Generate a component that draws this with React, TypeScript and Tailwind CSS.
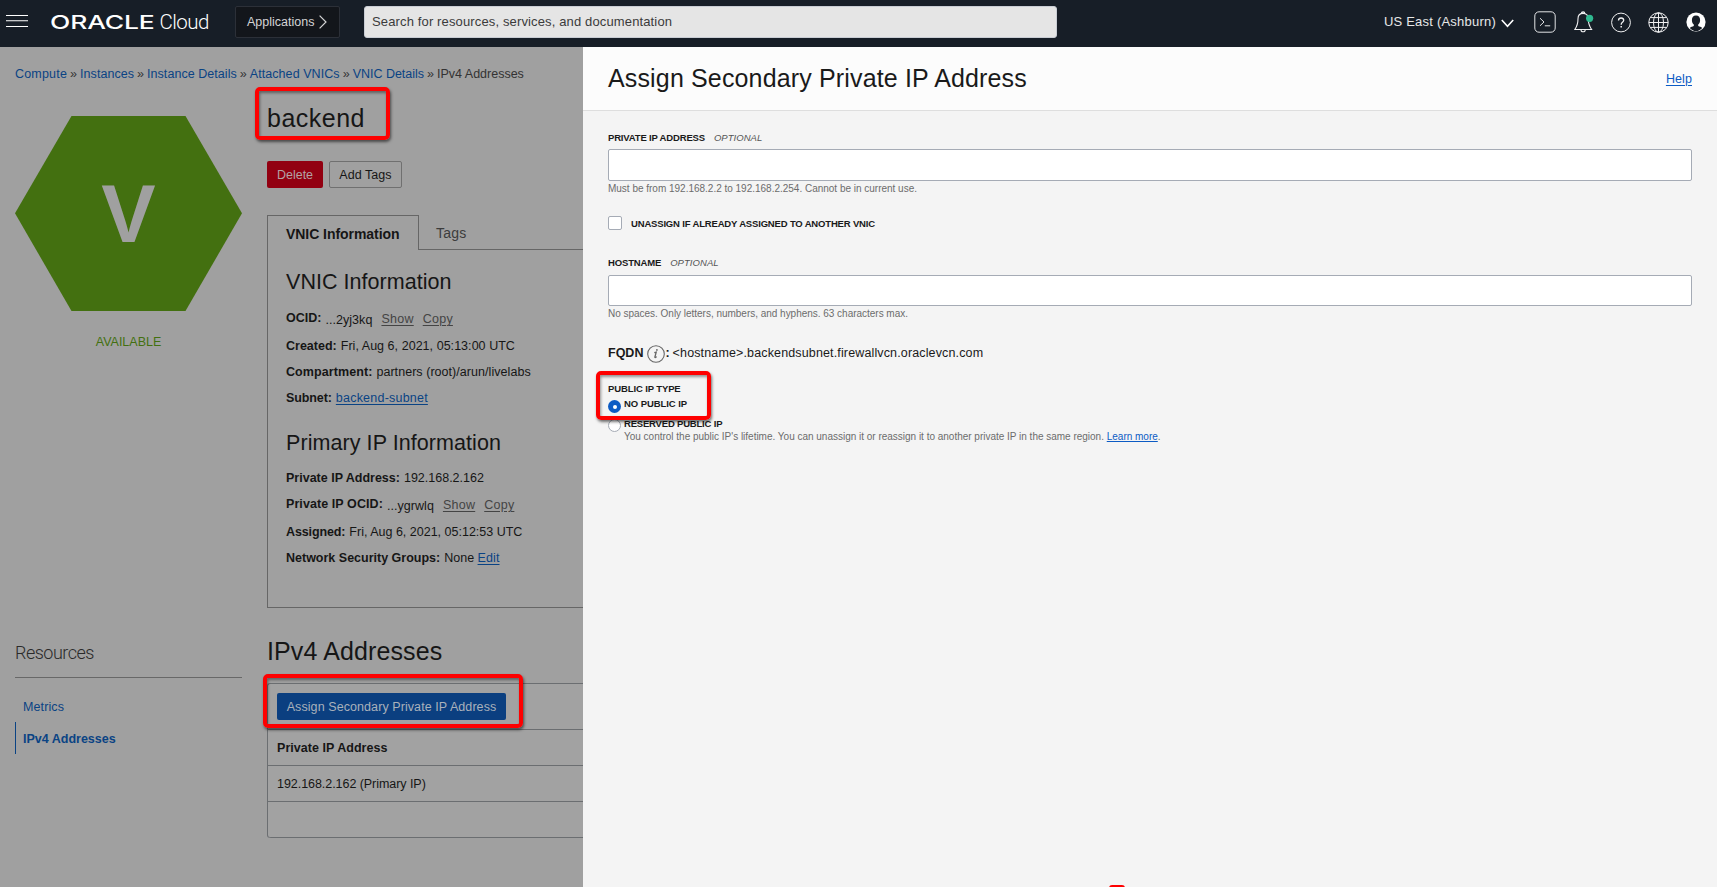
import type { ReactNode } from "react";

const crumbs = [
  { label: "Compute", cls: "tracking-[0.19px]" },
  { label: "Instances", cls: "tracking-[0.05px]" },
  { label: "Instance Details", cls: "tracking-[0.05px]" },
  { label: "Attached VNICs", cls: "tracking-[0.07px]" },
  { label: "VNIC Details", cls: "tracking-[-0.02px]" },
];

function Hamburger() {
  return (
    <svg className="h-[14px] w-[22px] shrink-0" viewBox="0 0 22 14" stroke="#fff" strokeWidth="1.1">
      <path d="M0 1.500h22M0 6.700h22M0 12.500h22" />
    </svg>
  );
}

function TerminalIcon() {
  return (
    <svg className="h-[22px] w-[22px]" viewBox="0 0 22 22" fill="none" stroke="#e3e4e6" strokeWidth="1">
      <rect x="0.8" y="0.8" width="20.4" height="20.4" rx="4.2" />
      <path d="M6 7.2l4 3.8-4 3.8M10.8 14.8h5.4" />
    </svg>
  );
}

function BellIcon() {
  return (
    <svg className="h-[22px] w-[20px]" viewBox="0 0 20 22" fill="none" stroke="#f1f1f2" strokeWidth="1.1">
      <path d="M7.4 2.6a1.7 1.7 0 0 1 3.4 0M9.1 2.4c-3.3 0-5.1 2.4-5.1 5.4 0 5-.7 7.3-3.2 10.7h16.8c-2.5-3.4-3.3-5.7-3.3-10.7 0-3-1.9-5.4-5.2-5.4z" />
      <path d="M7 18.7a2.1 2.1 0 0 0 4.2 0" />
      <circle cx="15.6" cy="7.3" r="3.6" fill="#2fb990" stroke="none" />
    </svg>
  );
}

function HelpIcon() {
  return (
    <svg className="h-[21px] w-[20px]" viewBox="0 0 20 21" fill="none" stroke="#f1f1f2" strokeWidth="1">
      <circle cx="10" cy="10.5" r="9.4" />
      <path d="M7.5 8.500c0-1.700 1-2.500 2.600-2.500s2.600.9 2.600 2.300c0 1.900-2.500 2.100-2.500 4.100v.4" strokeWidth="1.300" />
      <path d="M10.2 14v1.500" strokeWidth="1.500" />
    </svg>
  );
}

function GlobeIcon() {
  return (
    <svg className="h-[21px] w-[21px]" viewBox="0 0 21 21" fill="none" stroke="#f1f1f2" strokeWidth="1">
      <circle cx="10.5" cy="10.5" r="9.7" />
      <ellipse cx="10.5" cy="10.5" rx="5" ry="9.7" />
      <path d="M10.5 .8v19.4M.8 10.5h19.4M2.6 5.6h15.8M2.6 15.4h15.8" />
    </svg>
  );
}

function AvatarIcon() {
  return (
    <svg className="h-[20px] w-[20px]" viewBox="0 0 20 20">
      <circle cx="10" cy="10" r="9.6" fill="#fff" />
      <path
        d="M10 3.6c-2.8 0-4.1 1.9-4.1 4.4 0 2 .7 3.6 1.9 4.6v1.300c-1.400.5-3 1-4 2C5.500 18 7.600 19 10 19s4.500-1 6.200-3.100c-1-1-2.600-1.500-4-2v-1.300c1.200-1 1.900-2.600 1.900-4.600 0-2.500-1.300-4.400-4.100-4.400z"
        fill="#171e27"
      />
    </svg>
  );
}

function InfoIcon() {
  return (
    <svg className="ml-1 h-[18px] w-[18px] self-end" viewBox="0 0 18 18" fill="none" stroke="#666">
      <circle cx="9" cy="9" r="8.3" strokeWidth="1.1" />
      <path d="M7.300 7.600l1.900-.5-1.300 4.900c-.2.9.6.8 1.800-.4" strokeWidth="1.3" />
      <circle cx="9.900" cy="4.900" r=".9" fill="#666" stroke="none" />
    </svg>
  );
}

function Row({ label, labelClass = "", children }: { label: string; labelClass?: string; children: ReactNode }) {
  return (
    <div className="flex h-5 whitespace-pre leading-5">
      <span className={"font-bold " + labelClass}>{label}</span>
      <span className="ml-1">{children}</span>
    </div>
  );
}

function OcidRow({ label, labelClass, value }: { label: string; labelClass: string; value: string }) {
  return (
    <div className="flex h-[22px] leading-5">
      <span className={"font-bold " + labelClass}>{label}</span>
      <span className="ml-1 pt-0.5 tracking-[0.05px]">{value}</span>
      <a className="ml-[9px] pt-px tracking-[0.25px] text-[#444] underline underline-offset-2">Show</a>
      <a className="ml-[9px] pt-px tracking-[0.25px] text-[#444] underline underline-offset-2">Copy</a>
    </div>
  );
}

function TopBar() {
  return (
    <header className="flex h-[47px] items-start bg-[#171e27] pl-[6px] pr-[11px] text-[#e6e7e8]">
      <div className="mt-[14px]">
        <Hamburger />
      </div>
      <div className="ml-[22px] mt-[10px] flex h-6 w-[159px] items-center text-white">
        <span className="w-[110px] origin-left scale-x-[1.43] font-['Inter'] text-[18.5px] font-medium leading-6 tracking-[-0.1px]">ORACLE</span>
        <span className="font-['Roboto'] text-[20.5px] font-light leading-6 tracking-[-0.5px]">Cloud</span>
      </div>
      <button className="ml-[26px] mt-[6px] flex h-8 w-[105px] items-center rounded-xs border border-[#2c3038] bg-[#13161b] pl-[11px] text-[12.5px] text-[#d4d4d5]">
        Applications
        <svg className="ml-[5px] h-[14px] w-[8px]" viewBox="0 0 8 14" fill="none" stroke="#d4d4d5" strokeWidth="1.2">
          <path d="M.6.6l6.400 6.400L.6 13.400" />
        </svg>
      </button>
      <div className="ml-6 mt-[6px] flex h-8 w-[693px] items-center rounded-[3px] border border-[#c9cdd4] bg-[#e5e5e5] pl-[7px] text-[13px] tracking-[0.138px] text-[#3b3b3b]">
        Search for resources, services, and documentation
      </div>
      <div className="ml-auto flex h-11 items-center">
        <span className="text-[13px] leading-5 tracking-[0.22px]">US East (Ashburn)</span>
        <svg className="ml-[5px] mt-[2px] h-[9px] w-[13px]" viewBox="0 0 13 9" fill="none" stroke="#fff" strokeWidth="1.6">
          <path d="M.8 1l5.700 6.300L12.200 1" />
        </svg>
        <div className="ml-[20px]"><TerminalIcon /></div>
        <div className="ml-[18px]"><BellIcon /></div>
        <div className="ml-[17px]"><HelpIcon /></div>
        <div className="ml-[17px]"><GlobeIcon /></div>
        <div className="ml-[17px]"><AvatarIcon /></div>
      </div>
    </header>
  );
}

function Sidebar() {
  return (
    <aside className="w-[227px] shrink-0">
      <svg className="mt-8 block h-[195px] w-[227px]" viewBox="0 0 227 195">
        <path d="M56.500 0H170.500L227 97.300L170.500 195H56.500L0 97.300z" fill="#437010" />
        <text x="113.500" y="126" textAnchor="middle" fontFamily="Liberation Sans" fontWeight="700" fontSize="81.500" fill="#a0a0a0">
          V
        </text>
      </svg>
      <div className="mt-[21px] h-5 text-center leading-5 text-[#437010]">AVAILABLE</div>
      <h3 className="mt-[289px] h-[37px] border-b border-[#686868] font-['Roboto'] text-[18px] font-light leading-6 tracking-[-0.5px] text-[#2a2a2a]">
        Resources
      </h3>
      <nav className="mt-3 text-[#0a4384]">
        <div className="flex h-8 items-center pl-2 pt-[2px] tracking-[0.1px]">Metrics</div>
        <div className="flex h-8 items-center border-l border-[#0a4384] pl-[7px] pt-[2px] font-bold">IPv4 Addresses</div>
      </nav>
    </aside>
  );
}

function Details() {
  return (
    <main className="ml-[25px] w-[316px] shrink-0">
      <h1 className="mt-[19px] h-[30px] text-[25px] leading-[30px] tracking-[0.5px]">backend</h1>
      <div className="mt-7 flex h-[27px] gap-[6px]">
        <button className="w-14 rounded-[2px] bg-[#920011] pt-px text-[#b3a3a5]">Delete</button>
        <button className="w-[73px] rounded-[2px] border border-[#707070] pt-px tracking-[0.05px]">Add Tags</button>
      </div>
      <div className="mt-[27px] flex h-[35px]">
        <div className="w-[152px] border-x border-t border-[#666] pl-[18px] pt-[8px] text-[14px] font-bold leading-5 tracking-[-0.05px]">
          VNIC Information
        </div>
        <div className="flex-1 border-b border-[#666] pl-[17px] pt-[8px] text-[14px] leading-5 tracking-[0.2px] text-[#3c3c3c]">Tags</div>
      </div>
      <section className="h-[358px] border-b border-l border-[#666] pl-[18px] pt-[19px]">
        <h2 className="text-[21.5px] leading-[26px] tracking-[0.04px]">VNIC Information</h2>
        <div className="mt-[13px] flex flex-col gap-[6px]">
          <OcidRow label="OCID:" labelClass="" value="...2yj3kq" />
          <Row label="Created:">
            <span className="tracking-[0.04px]">Fri, Aug 6, 2021, 05:13:00 UTC</span>
          </Row>
          <Row label="Compartment:" labelClass="tracking-[0.08px]">
            <span className="tracking-[0.05px]">partners (root)/arun/livelabs</span>
          </Row>
          <Row label="Subnet:" labelClass="tracking-[-0.1px]">
            <a className="tracking-[0.22px] text-[#0a4384] underline underline-offset-2">backend-subnet</a>
          </Row>
        </div>
        <h2 className="mt-[22px] text-[21.5px] leading-[26px] tracking-[0.07px]">Primary IP Information</h2>
        <div className="mt-3 flex flex-col gap-[6px]">
          <Row label="Private IP Address:">192.168.2.162</Row>
          <OcidRow label="Private IP OCID:" labelClass="tracking-[0.08px]" value="...ygrwlq" />
          <Row label="Assigned:" labelClass="tracking-[-0.12px]">Fri, Aug 6, 2021, 05:12:53 UTC</Row>
          <Row label="Network Security Groups:">
            None <a className="tracking-[0.1px] text-[#0a4384] underline underline-offset-2">Edit</a>
          </Row>
        </div>
      </section>
      <h2 className="mt-7 h-[30px] text-[25px] leading-[30px] tracking-[0.12px]">IPv4 Addresses</h2>
      <div className="mt-[17px] rounded-l-[3px] border-l border-t border-[#6b6e71] bg-[#a2a2a2]">
        <div className="flex h-[46px] items-center border-b border-[#6b6e71] pl-[9px]">
          <button className="h-[27px] w-[229px] rounded-[2px] bg-[#0b3f80] pt-px tracking-[0.08px] text-[#a9b1bb]">
            Assign Secondary Private IP Address
          </button>
        </div>
        <div className="flex h-9 items-center border-b border-[#6b6e71] pl-[9px] pt-[2px] font-bold tracking-[0.04px]">Private IP Address</div>
        <div className="flex h-9 items-center border-b border-[#6b6e71] pl-[9px] pt-[2px] tracking-[-0.05px]">192.168.2.162 (Primary IP)</div>
        <div className="h-9 rounded-bl-[3px] border-b border-[#6b6e71]" />
      </div>
    </main>
  );
}

function FieldLabel({ text, cls }: { text: string; cls: string }) {
  return (
    <label className="flex h-3 gap-[9px] text-[9.5px] leading-3">
      <span className={"font-bold " + cls}>{text}</span>
      <span className="italic tracking-[0.05px] text-[#555]">OPTIONAL</span>
    </label>
  );
}

function Drawer() {
  return (
    <section className="flex-1 bg-[#f4f4f4]">
      <div className="flex h-16 items-start justify-between border-b border-[#dedede] bg-[#fcfcfc] px-[25px] pt-4">
        <h1 className="text-[25px] leading-[30px] tracking-[0.15px]">Assign Secondary Private IP Address</h1>
        <a className="pt-[6px] leading-5 tracking-[0.1px] text-[#0c5bc4] underline underline-offset-2">Help</a>
      </div>
      <div className="px-[25px] pt-[21px]">
        <FieldLabel text="PRIVATE IP ADDRESS" cls="tracking-[-0.17px]" />
        <div className="mt-[5px] h-8 rounded-[2px] border border-[#a5abb5] bg-white" />
        <p className="mt-0.5 text-[10px] leading-3 tracking-[-0.01px] text-[#6c6c6c]">
          Must be from 192.168.2.2 to 192.168.2.254. Cannot be in current use.
        </p>
        <div className="mt-[21px] flex h-[14px] gap-[9px]">
          <span className="h-[14px] w-[14px] rounded-[2px] border border-[#a5abb5] bg-white" />
          <span className="pt-[2px] text-[9.5px] font-bold leading-3 tracking-[-0.17px]">UNASSIGN IF ALREADY ASSIGNED TO ANOTHER VNIC</span>
        </div>
        <div className="mt-[27px]">
          <FieldLabel text="HOSTNAME" cls="tracking-[-0.15px]" />
        </div>
        <div className="mt-[6px] h-[31px] rounded-[2px] border border-[#a5abb5] bg-white" />
        <p className="mt-0.5 text-[10px] leading-3 tracking-[-0.02px] text-[#6c6c6c]">
          No spaces. Only letters, numbers, and hyphens. 63 characters max.
        </p>
        <div className="mt-[23px] flex h-5 leading-5">
          <span className="font-bold">FQDN</span>
          <InfoIcon />
          <span className="font-bold">:</span>
          <span className="ml-[3px] tracking-[0.14px]">{"<hostname>.backendsubnet.firewallvcn.oraclevcn.com"}</span>
        </div>
        <div className="mt-5 text-[9.5px] font-bold leading-3 tracking-[-0.12px]">PUBLIC IP TYPE</div>
        <div className="mt-[3px] flex h-5 gap-[3px]">
          <span className="mt-[2px] flex h-[13px] w-[13px] items-center justify-center rounded-full bg-[#0c5bc4]">
            <span className="h-1 w-1 rounded-full bg-white" />
          </span>
          <span className="text-[9.5px] font-bold leading-3 tracking-[-0.07px]">NO PUBLIC IP</span>
        </div>
        <div className="flex gap-[3px]">
          <span className="mt-px h-[13px] w-[13px] rounded-full border border-[#a5abb5] bg-white" />
          <div className="leading-3">
            <div className="h-[13px] text-[9.5px] font-bold leading-[11px] tracking-[-0.19px]">RESERVED PUBLIC IP</div>
            <div className="text-[10px] leading-3 tracking-[-0.01px] text-[#6c6c6c]">
              You control the public IP's lifetime. You can unassign it or reassign it to another private IP in the same region.{" "}
              <a className="text-[#0c5bc4] underline underline-offset-1">Learn more</a>.
            </div>
          </div>
        </div>
      </div>
    </section>
  );
}

export default function App() {
  return (
    <div className="relative flex h-[887px] w-[1717px] flex-col overflow-hidden font-['Liberation_Sans',Arial,sans-serif] text-[12.5px] text-[#1a1a1a]">
      <TopBar />
      <div className="flex flex-1">
        <div className="w-[583px] shrink-0 overflow-hidden bg-[#a0a0a0] pl-[15px] pt-[17px] text-[#161616]">
          <div className="flex h-5 leading-5 text-[#0a4384]">
            {crumbs.map((c) => (
              <span key={c.label} className="flex">
                <span className={c.cls}>{c.label}</span>
                <span className="w-[13px] text-center text-[#333]">»</span>
              </span>
            ))}
            <span className="text-[#333]">IPv4 Addresses</span>
          </div>
          <div className="flex">
            <Sidebar />
            <Details />
          </div>
        </div>
        <Drawer />
      </div>
      <div className="absolute left-[255px] top-[87px] h-[53px] w-[135px] rounded-[5px] border-4 border-[#fe0000] shadow-[1px_2px_3px_rgba(0,0,0,0.55),inset_1px_2px_3px_rgba(0,0,0,0.4)]" />
      <div className="absolute left-[263px] top-[674px] h-[54px] w-[260px] rounded-[5px] border-4 border-[#fe0000] shadow-[1px_2px_3px_rgba(0,0,0,0.55),inset_1px_2px_3px_rgba(0,0,0,0.4)]" />
      <div className="absolute left-[596px] top-[371px] h-[49px] w-[115px] rounded-[5px] border-4 border-[#fe0000] shadow-[1px_2px_3px_rgba(0,0,0,0.55),inset_1px_2px_3px_rgba(0,0,0,0.4)]" />
      <div className="absolute left-[1109px] top-[885px] h-4 w-4 rounded-t-[3px] bg-[#fe0000]" />
    </div>
  );
}
